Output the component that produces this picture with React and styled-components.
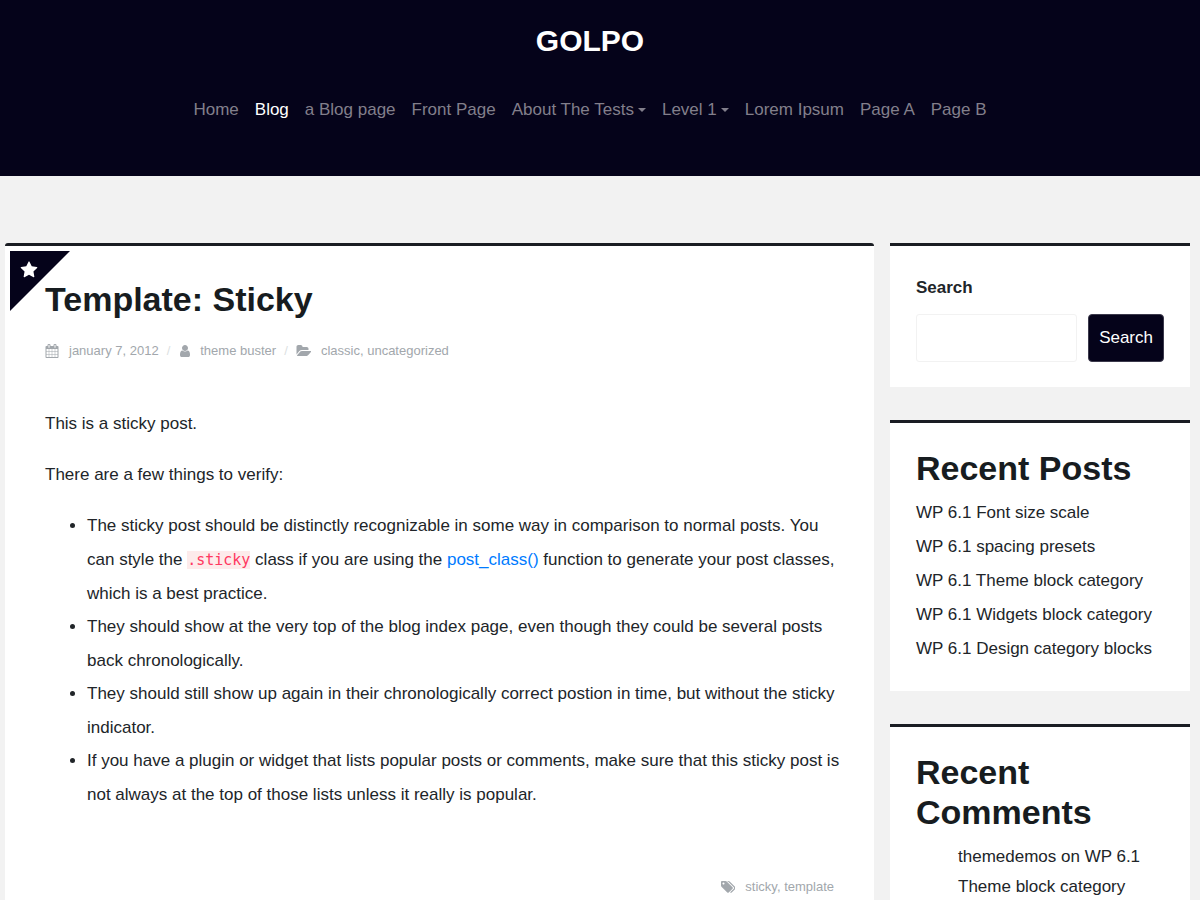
import React from 'react';
import styled, { createGlobalStyle } from 'styled-components';

const GlobalStyle = createGlobalStyle`
    * {
        box-sizing: border-box;
    }

    body {
        margin: 0;
        background: #f2f2f2;
        color: #212529;
        font-family: "Liberation Sans", Helvetica, Arial, sans-serif;
        font-size: 17px;
        line-height: 34px;
    }

    a {
        color: inherit;
        text-decoration: none;
    }
`

const Header = styled.header`
    display: flex;
    flex-direction: column;
    align-items: center;
    gap: 35px;
    padding: 24px 20px 49px 0;
    background: #05031a;
`

const SiteTitle = styled.a`
    color: white;
    font-size: 30px;
    font-weight: 700;
`

const Nav = styled.nav`
    display: flex;
    flex-wrap: wrap;
    justify-content: center;
    gap: 0 16px;
`

const NavLink = styled.a`
    display: flex;
    align-items: center;
    gap: 4px;
    color: ${({ $active }) => ($active ? 'white' : '#827f8b')};
`

const Caret = styled.span`
    border-top: 4px solid;
    border-left: 4px solid transparent;
    border-right: 4px solid transparent;
`

const Page = styled.div`
    display: grid;
    grid-template-columns: minmax(0, 1fr) 300px;
    gap: 16px;
    padding: 67px 10px 0 5px;

    @media screen and (max-width : 800px) {
        grid-template-columns: 1fr;
    }
`

const Post = styled.article`
    position: relative;
    padding: 33px 34px 34px 40px;
    border-top: 3px solid #1a1d23;
    border-radius: 3px 3px 0 0;
    background: white;
`

const StickyCorner = styled.span`
    position: absolute;
    top: 5px;
    left: 5px;
    width: 60px;
    height: 60px;
    padding: 10px;
    background: #05031a;
    clip-path: polygon(0 0, 100% 0, 0 100%);
    color: white;
    line-height: 0;
`

const Heading = styled.h2`
    position: relative;
    margin: 0;
    color: #171c20;
    font-size: 34px;
    font-weight: 700;
    line-height: 40px;
`

const Meta = styled.div`
    display: flex;
    flex-wrap: wrap;
    align-items: center;
    margin-top: 15px;
    color: #a2a7ac;
    font-size: 13px;
`

const TagsMeta = styled(Meta)`
    justify-content: flex-end;
    margin-top: 58px;
    padding-right: 6px;
`

const MetaItem = styled.span`
    display: flex;
    align-items: center;
    gap: 10px;
`

const Slash = styled.span`
    margin: 0 8px;
    color: #dcdfe2;
`

const Content = styled.div`
    margin-top: 39px;

    p {
        margin: 0 0 17px;
    }

    ul {
        margin: 0;
        padding-left: 42px;
    }

    li + li {
        margin-top: -1px;
    }

    a {
        color: #007bff;
    }

    code {
        background: #fdebeb;
        color: #ff3860;
        font-family: "DejaVu Sans Mono", monospace;
        font-size: 15px;
    }
`

const Sidebar = styled.aside`
    display: flex;
    flex-direction: column;
    gap: 33px;
`

const Widget = styled.section`
    padding: 25px 26px;
    border-top: 3px solid #1a1d23;
    background: white;
`

const SearchLabel = styled.label`
    display: block;
    font-weight: 700;
`

const SearchRow = styled.div`
    display: flex;
    gap: 11px;
    margin-top: 9px;
`

const SearchInput = styled.input`
    flex: 1;
    min-width: 0;
    height: 48px;
    padding: 8px;
    border: 1px solid #f2f2f2;
    border-radius: 3px;
    background: white;
    font: inherit;
`

const SearchButton = styled.button`
    height: 48px;
    padding: 0 10px;
    border: 1px solid #3b394b;
    border-radius: 4px;
    background: #05031a;
    color: white;
    font: inherit;
`

const PostList = styled.ul`
    margin: 8px 0 0;
    padding: 0;
    list-style: none;
`

const CommentList = styled.ol`
    margin: 10px 0 0;
    padding: 0 0 0 42px;
    line-height: 30px;
    list-style: none;
`

// glyphs are drawn on a 1792 unit high grid
const icons = {
    star: {
        width: 1792,
        d: 'M1728 647q0 22-26 48l-363 354 86 500q1 7 1 20 0 21-10.5 35.5t-30.5 14.5q-19 0-40-12l-449-236-449 236q-22 12-40 12-21 0-31.5-14.5t-10.5-35.5q0-6 2-20l86-500-364-354q-25-27-25-48 0-37 56-46l502-73 225-455q19-41 49-41t49 41l225 455 502 73q56 9 56 46z',
    },
    calendar: {
        width: 1792,
        d: 'M192 1664h288v-288h-288v288zm352 0h320v-288h-320v288zm-352-352h288v-320h-288v320zm352 0h320v-320h-320v320zm-352-384h288v-288h-288v288zm736 736h320v-288h-320v288zm-384-736h320v-288h-320v288zm768 736h288v-288h-288v288zm-384-352h320v-320h-320v320zm-352-864v-288q0-13-9.5-22.5t-22.5-9.5h-64q-13 0-22.5 9.5t-9.5 22.5v288q0 13 9.5 22.5t22.5 9.5h64q13 0 22.5-9.5t9.5-22.5zm736 864h288v-320h-288v320zm-384-384h320v-288h-320v288zm384 0h288v-288h-288v288zm32-480v-288q0-13-9.5-22.5t-22.5-9.5h-64q-13 0-22.5 9.5t-9.5 22.5v288q0 13 9.5 22.5t22.5 9.5h64q13 0 22.5-9.5t9.5-22.5zm384-64v1280q0 52-38 90t-90 38h-1408q-52 0-90-38t-38-90v-1280q0-52 38-90t90-38h128v-96q0-66 47-113t113-47h64q66 0 113 47t47 113v96h384v-96q0-66 47-113t113-47h64q66 0 113 47t47 113v96h128q52 0 90 38t38 90z',
    },
    user: {
        width: 1536,
        d: 'M1536 1399q0 109-62.5 187t-150.5 78h-854q-88 0-150.5-78t-62.5-187q0-85 8.5-160.5t31.5-152 58.5-131 94-89 134.5-34.5q131 128 313 128t313-128q76 0 134.5 34.5t94 89 58.5 131 31.5 152 8.5 160.5zm-256-887q0 159-112.5 271.5t-271.5 112.5-271.5-112.5-112.5-271.5 112.5-271.5 271.5-112.5 271.5 112.5 112.5 271.5z',
    },
    folder: {
        width: 1943,
        d: 'M1943 952q0 31-31 66l-336 396q-43 51-120.5 86.5t-143.5 35.5h-1088q-34 0-60.5-13t-26.5-43q0-31 31-66l336-396q43-51 120.5-86.5t143.5-35.5h1088q34 0 60.5 13t26.5 43zm-343-344v160h-832q-94 0-197 47.5t-164 119.5l-337 396-5 6q0-4-.5-12.5t-.5-12.5v-960q0-92 66-158t158-66h320q92 0 158 66t66 158v32h544q92 0 158 66t66 158z',
    },
    tags: {
        width: 1899,
        d: 'M448 448q0-53-37.5-90.5t-90.5-37.5-90.5 37.5-37.5 90.5 37.5 90.5 90.5 37.5 90.5-37.5 37.5-90.5zm1067 576q0 53-37 90l-491 492q-39 37-91 37-53 0-90-37l-715-716q-38-37-64.5-101t-26.5-117v-416q0-52 38-90t90-38h416q53 0 117 26.5t102 64.5l715 714q37 39 37 91zm384 0q0 53-37 90l-491 492q-39 37-91 37-36 0-59-14t-53-45l470-470q37-37 37-90 0-52-37-91l-715-714q-38-38-102-64.5t-117-26.5h224q53 0 117 26.5t102 64.5l715 714q37 39 37 91z',
    },
}

const Icon = ({ name, size = 14 }) => (
    <svg
        viewBox={`0 0 ${icons[name].width} 1792`}
        height={size}
        fill="currentColor"
        aria-hidden="true"
    >
        <path d={icons[name].d} />
    </svg>
)

const navItems = [
    { label: 'Home' },
    { label: 'Blog', active: true },
    { label: 'a Blog page' },
    { label: 'Front Page' },
    { label: 'About The Tests', dropdown: true },
    { label: 'Level 1', dropdown: true },
    { label: 'Lorem Ipsum' },
    { label: 'Page A' },
    { label: 'Page B' },
]

const recentPosts = [
    'WP 6.1 Font size scale',
    'WP 6.1 spacing presets',
    'WP 6.1 Theme block category',
    'WP 6.1 Widgets block category',
    'WP 6.1 Design category blocks',
]

const App = () => {
    return (
        <>
            <GlobalStyle />
            <Header>
                <SiteTitle href="#">GOLPO</SiteTitle>
                <Nav>
                    {navItems.map(({ label, active, dropdown }) => (
                        <NavLink key={label} href="#" $active={active}>
                            {label}
                            {dropdown && <Caret />}
                        </NavLink>
                    ))}
                </Nav>
            </Header>
            <Page>
                <Post>
                    <StickyCorner>
                        <Icon name="star" size={18} />
                    </StickyCorner>
                    <Heading>
                        <a href="#">Template: Sticky</a>
                    </Heading>
                    <Meta>
                        <MetaItem>
                            <Icon name="calendar" />
                            <a href="#">january 7, 2012</a>
                        </MetaItem>
                        <Slash>/</Slash>
                        <MetaItem>
                            <Icon name="user" />
                            <a href="#">theme buster</a>
                        </MetaItem>
                        <Slash>/</Slash>
                        <MetaItem>
                            <Icon name="folder" />
                            <span><a href="#">classic</a>, <a href="#">uncategorized</a></span>
                        </MetaItem>
                    </Meta>
                    <Content>
                        <p>This is a sticky post.</p>
                        <p>There are a few things to verify:</p>
                        <ul>
                            <li>
                                The sticky post should be distinctly recognizable in some way in comparison to normal posts. You
                                can style the <code>.sticky</code> class if you are using the <a href="#">post_class()</a> function
                                to generate your post classes, which is a best practice.
                            </li>
                            <li>
                                They should show at the very top of the blog index page, even though they could be several posts
                                back chronologically.
                            </li>
                            <li>
                                They should still show up again in their chronologically correct postion in time, but without the
                                sticky indicator.
                            </li>
                            <li>
                                If you have a plugin or widget that lists popular posts or comments, make sure that this sticky
                                post is not always at the top of those lists unless it really is popular.
                            </li>
                        </ul>
                    </Content>
                    <TagsMeta>
                        <MetaItem>
                            <Icon name="tags" />
                            <span><a href="#">sticky</a>, <a href="#">template</a></span>
                        </MetaItem>
                    </TagsMeta>
                </Post>
                <Sidebar>
                    <Widget>
                        <SearchLabel htmlFor="search">Search</SearchLabel>
                        <SearchRow>
                            <SearchInput id="search" type="search" />
                            <SearchButton type="submit">Search</SearchButton>
                        </SearchRow>
                    </Widget>
                    <Widget>
                        <Heading>Recent Posts</Heading>
                        <PostList>
                            {recentPosts.map((post) => (
                                <li key={post}><a href="#">{post}</a></li>
                            ))}
                        </PostList>
                    </Widget>
                    <Widget>
                        <Heading>Recent Comments</Heading>
                        <CommentList>
                            <li>
                                <a href="#">themedemos</a> on <a href="#">WP 6.1 Theme block category</a>
                            </li>
                        </CommentList>
                    </Widget>
                </Sidebar>
            </Page>
        </>
    )
}

export default App;
